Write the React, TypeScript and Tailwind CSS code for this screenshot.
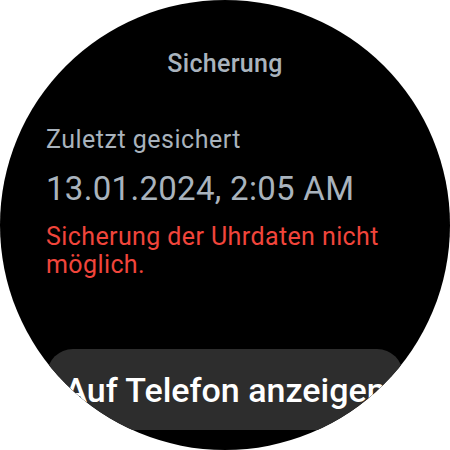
import React from 'react';

export default function App() {
  return (
    <div className="w-[450px] h-[450px] bg-white" style={{ fontFamily: 'Roboto, "Noto Sans", sans-serif' }}>
      <div className="w-[450px] h-[450px] rounded-full bg-black overflow-hidden flex flex-col">
        <h1 className="mt-[50px] text-center text-[25px] leading-[28px] font-medium tracking-[0.3px] text-[#a9b3bd]">Sicherung</h1>

        <div className="px-[46px] mt-[48px] flex flex-col">
          <p className="text-[25px] leading-[28px] tracking-[0.5px] text-[#a9b3bd]">Zuletzt gesichert</p>
          <p className="mt-[15px] text-[33px] leading-[40px] tracking-[0.3px] text-[#a9b3bd]">13.01.2024, 2:05 AM</p>
          <p className="mt-[14px] text-[25px] leading-[28px] tracking-[0.4px] text-[#f1453b]">
            Sicherung der Uhrdaten nicht möglich.
          </p>
        </div>

        <button className="mt-[70px] mx-[47px] h-[81px] shrink-0 rounded-[26px] bg-[#2d2d2d] flex items-center justify-center whitespace-nowrap">
          <span className="text-[34px] leading-[40px] font-medium text-white">Auf Telefon anzeigen</span>
        </button>
      </div>
    </div>
  );
}
